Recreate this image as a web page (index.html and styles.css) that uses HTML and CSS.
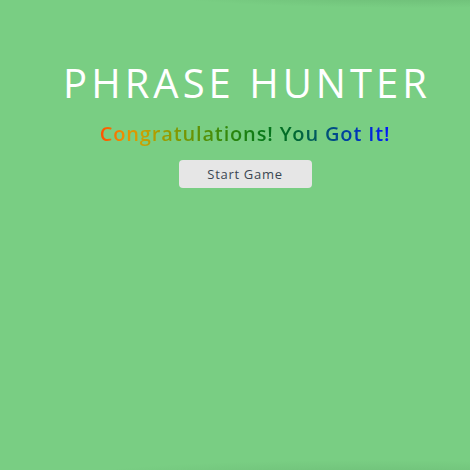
FILE: index.html
```html
<!DOCTYPE html>
<html lang="en">
<head>
<meta charset="utf-8">
<title>Phrase Hunter</title>
<link rel="stylesheet" href="styles.css">
</head>
<body>
<div class="overlay win">
  <h2 class="title">Phrase Hunter</h2>
  <h1 class="game-over-message"><span class="gradient-text">Congratulations! You Got It!</span></h1>
  <button class="btn-reset" type="button">Start Game</button>
</div>
</body>
</html>
```

FILE: styles.css
```css
html, body {
  margin: 0;
  padding: 0;
  height: 100%;
}

body {
  background-color: #79ce83;
  font-family: "Open Sans", "DejaVu Sans", sans-serif;
}

.overlay {
  box-sizing: border-box;
  min-height: 100%;
  display: flex;
  flex-direction: column;
  align-items: center;
  padding: 59px 0 0 20px;
  background:
    radial-gradient(ellipse 260px 14px at 420px -6px, rgba(40, 90, 50, 0.18), rgba(40, 90, 50, 0) 100%),
    radial-gradient(ellipse 300px 18px at 370px 478px, rgba(40, 90, 50, 0.14), rgba(40, 90, 50, 0) 100%),
    #79ce83;
}

.title {
  margin: 0;
  color: #ffffff;
  font-weight: 400;
  font-size: 40px;
  line-height: 48px;
  text-transform: uppercase;
  letter-spacing: 4px;
  text-indent: 4px;
}

.game-over-message {
  margin: 14px 0 0;
  font-size: 20px;
  line-height: 26px;
  font-weight: 600;
  letter-spacing: 0.85px;
}

.gradient-text {
  display: inline-block;
  background-image: linear-gradient(to right,
    #ff5000 0%,
    #f08c00 8%,
    #d0a000 14%,
    #8a9a00 25%,
    #3a8a0a 42%,
    #0a7a16 55%,
    #006a2a 66%,
    #00488f 82%,
    #0016ff 100%);
  -webkit-background-clip: text;
  background-clip: text;
  color: transparent;
  -webkit-text-fill-color: transparent;
}

.btn-reset {
  margin-top: 13px;
  width: 133px;
  height: 28px;
  border: none;
  border-radius: 4px;
  background: #e6e6e6;
  color: #3b4652;
  font-family: "Open Sans", "DejaVu Sans", sans-serif;
  font-size: 13px;
  letter-spacing: 0.7px;
  padding: 0;
}
```
